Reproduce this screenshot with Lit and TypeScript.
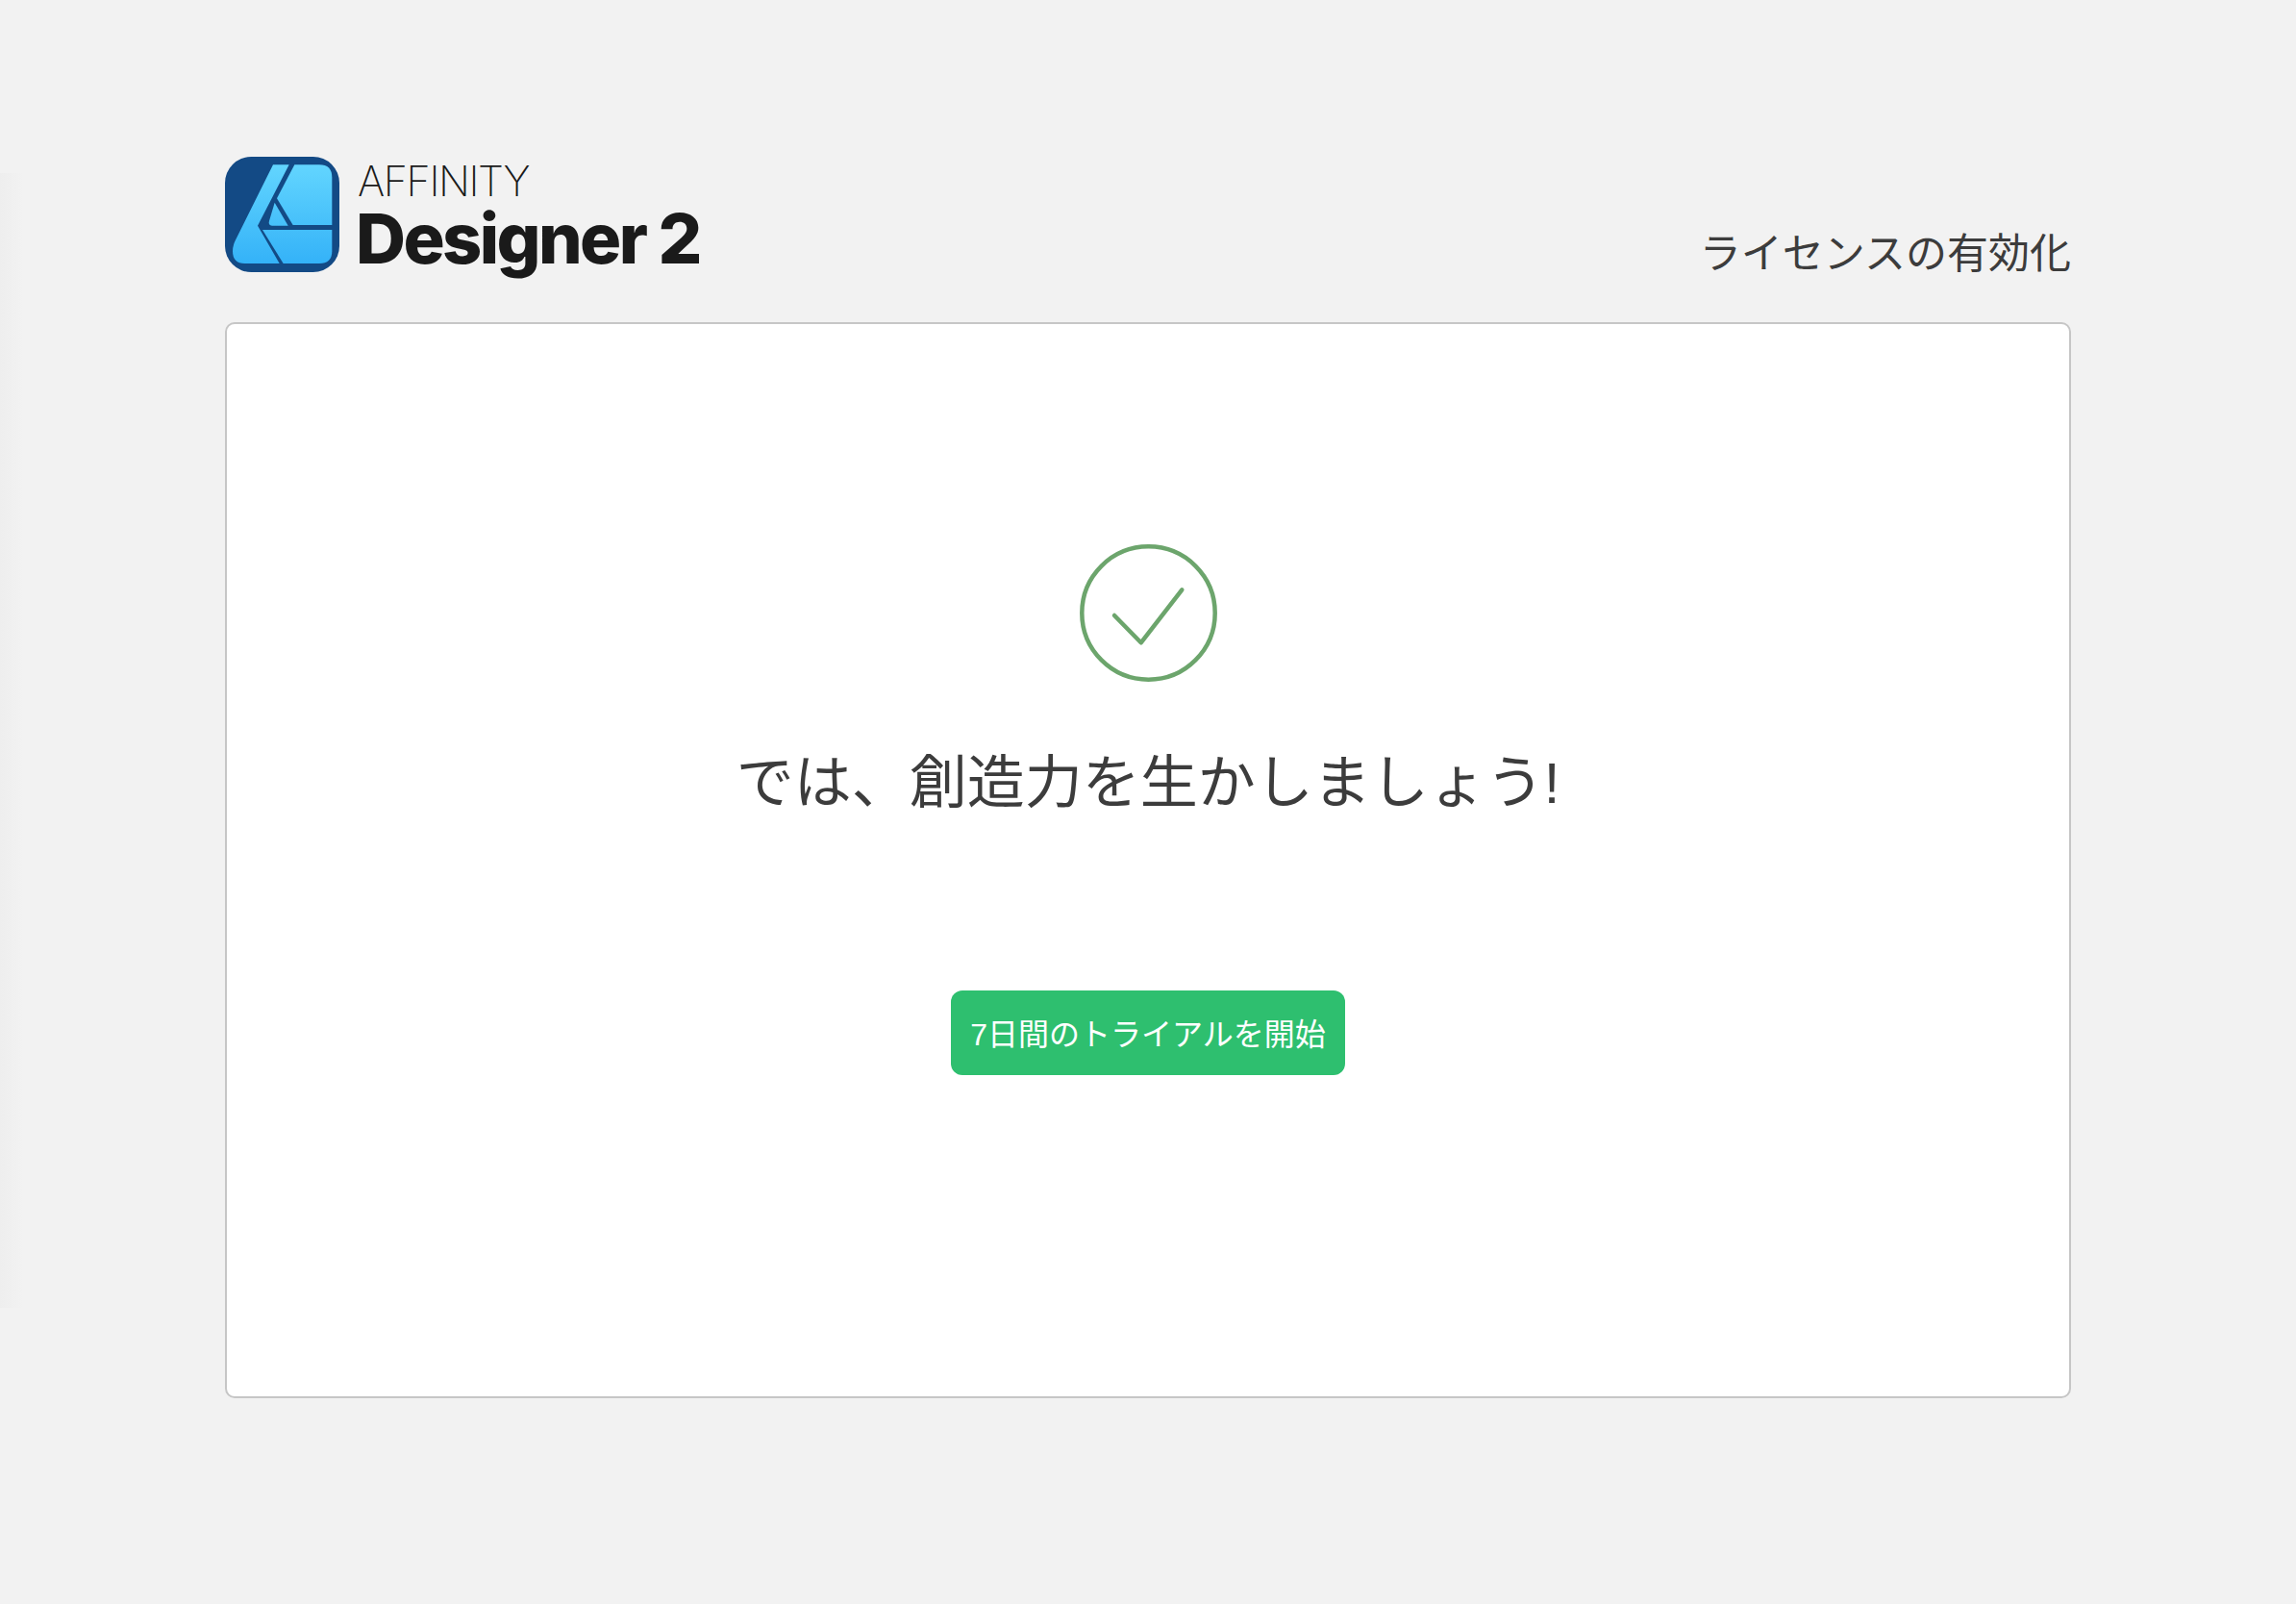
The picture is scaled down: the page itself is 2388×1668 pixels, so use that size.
import { LitElement, html, css } from "lit";
import { customElement } from "lit/decorators.js";

@customElement("app-root")
export class AppRoot extends LitElement {
  static styles = css`
    :host {
      display: block;
      box-sizing: border-box;
      min-height: 1668px;
      padding: 163px 234px 0;
      background: linear-gradient(to right, #eeeeee, #f2f2f2 24px) 0 180px / 24px 1180px no-repeat #f2f2f2;
      color: #3c3c3c;
      font-family: "Liberation Sans", "Noto Sans CJK JP", sans-serif;
    }
    .top {
      display: flex;
      justify-content: space-between;
      align-items: flex-end;
      height: 172px;
    }
    .brand {
      display: flex;
      align-items: flex-start;
      align-self: flex-start;
      gap: 17px;
    }
    .brand svg {
      display: block;
      flex: none;
    }
    .wordmark {
      display: flex;
      flex-direction: column;
      margin-top: 6px;
      color: #1a1a1a;
      font-family: Inter, sans-serif;
      white-space: nowrap;
    }
    .affinity {
      font-size: 43px;
      font-weight: 200;
      line-height: 38px;
      margin-left: 2px;
      letter-spacing: -1.4px;
    }
    .product {
      font-size: 72px;
      font-weight: 800;
      line-height: 82px;
      letter-spacing: -2.6px;
    }
    .activate {
      font-size: 43px;
      line-height: 60px;
      margin-bottom: 41px;
      font-weight: 400;
      white-space: nowrap;
    }
    .card {
      box-sizing: border-box;
      height: 1119px;
      background: #fff;
      border: 2px solid #c6c6c6;
      border-radius: 10px;
      padding-top: 229px;
      display: flex;
      flex-direction: column;
      align-items: center;
    }
    .card svg {
      display: block;
    }
    h1 {
      margin: 61px 0 0;
      font-size: 60px;
      font-weight: 400;
      line-height: 90px;
      white-space: nowrap;
    }
    button {
      margin-top: 170px;
      width: 410px;
      height: 88px;
      border: 0;
      border-radius: 12px;
      background: #2ebf6f;
      color: #fff;
      font: inherit;
      font-size: 32px;
      white-space: nowrap;
      padding: 0 0 3px;
    }
  `;

  render() {
    return html`
      <div class="top">
        <div class="brand">
          <svg width="119" height="120" viewBox="0 0 357 360">
            <defs>
              <linearGradient id="blue" gradientUnits="userSpaceOnUse" x1="0" y1="0" x2="0" y2="360">
                <stop offset="0" stop-color="#66d8ff"></stop>
                <stop offset="1" stop-color="#30aff7"></stop>
              </linearGradient>
            </defs>
            <rect width="357" height="360" rx="82" fill="#134a85"></rect>
            <path fill="url(#blue)" d="M150 25H200L102 215L170 333H62Q24 333 24 295Q24 278 32 262Z"></path>
            <path fill="url(#blue)" d="M217 25H294Q334 25 334 65V213H212L162 130Z"></path>
            <path fill="url(#blue)" d="M155 143L197 215H147Q134 213 138 200Z"></path>
            <path fill="url(#blue)" d="M117 228H334V295Q334 333 294 333H182Z"></path>
          </svg>
          <div class="wordmark">
            <span class="affinity">AFFINITY</span>
            <span class="product">Designer 2</span>
          </div>
        </div>
        <div class="activate">ライセンスの有効化</div>
      </div>
      <div class="card">
        <svg width="143" height="143" viewBox="0 0 143 143" fill="none" stroke="#6ca56c" stroke-width="4.5" stroke-linecap="round" stroke-linejoin="round">
          <circle cx="71.5" cy="71.5" r="69.2"></circle>
          <path d="M36 74L63.7 102.3L106.3 47.3"></path>
        </svg>
        <h1>では、創造力を生かしましょう!</h1>
        <button>7日間のトライアルを開始</button>
      </div>
    `;
  }
}
